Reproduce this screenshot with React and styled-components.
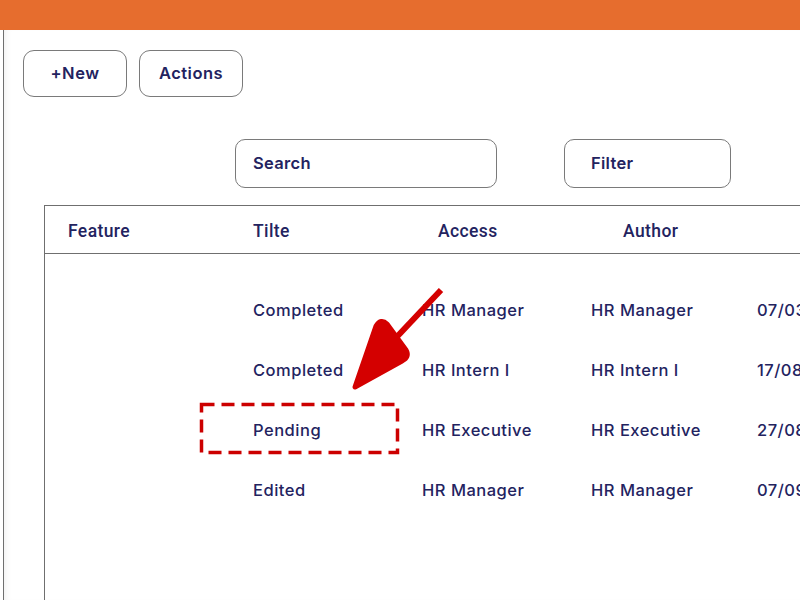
import React from "react";
import styled, { createGlobalStyle } from "styled-components";

const Global = createGlobalStyle`
  html, body { margin: 0; padding: 0; background: #fff; overflow: hidden; }
  body { font-family: Inter, "Open Sans", sans-serif; color: #23235f; }
`;

const Page = styled.div`
  position: relative;
  width: 800px;
  height: 600px;
  overflow: hidden;
`;

const TopBar = styled.div`
  height: 30px;
  background: #e66d2e;
`;

const Shell = styled.div`
  margin-left: 3px;
  height: 570px;
  border-left: 1.5px solid #6f6f6f;
  box-shadow: inset 6px 0 6px -4px rgba(0, 0, 0, 0.06);
`;

const Toolbar = styled.div`
  display: flex;
  gap: 12px;
  padding: 20px 0 0 19px;
`;

const Button = styled.button`
  width: 104px;
  height: 47px;
  padding: 0 0 2px;
  border: 1px solid #7a7a7a;
  border-radius: 11px;
  background: #fff;
  font-family: Inter, sans-serif;
  font-size: 16.5px;
  font-weight: 600;
  letter-spacing: 0.5px;
  color: #23235f;
`;

const SearchRow = styled.div`
  display: flex;
  gap: 67px;
  margin-top: 42px;
  padding-left: 231px;
`;

const Field = styled.div`
  width: ${(p) => p.$w}px;
  height: 49px;
  box-sizing: border-box;
  border: 1px solid #7a7a7a;
  border-radius: 10px;
  display: flex;
  align-items: center;
  padding: 0 0 2px ${(p) => p.$pad}px;
  font-size: 16.5px;
  font-weight: 600;
  letter-spacing: 0.3px;
  color: #23235f;
`;

const Table = styled.div`
  margin: 17px 0 0 40px;
  width: 800px;
  border-top: 1px solid #6f6f6f;
  border-left: 1px solid #6f6f6f;
`;

const HeadRow = styled.div`
  display: grid;
  grid-template-columns: 185px 185px 185px 185px;
  height: 48px;
  align-items: center;
  padding: 2px 0 0 23px;
  box-sizing: border-box;
  border-bottom: 1px solid #6f6f6f;
`;

const HeadCell = styled.div`
  font-family: Roboto, sans-serif;
  font-size: 17.5px;
  font-weight: 500;
  letter-spacing: 0.4px;
  color: #23235f;
`;

const Body = styled.div`
  padding-top: 26px;
  height: 320px;
`;

const Row = styled.div`
  display: grid;
  grid-template-columns: 208px 169px 169px 166px 200px;
  height: 60px;
  align-items: center;
  white-space: nowrap;
`;

const Cell = styled.div`
  font-size: 16.5px;
  font-weight: 500;
  color: #23235f;
  letter-spacing: 0.5px;
`;

const Overlay = styled.svg`
  position: absolute;
  left: 0;
  top: 0;
  pointer-events: none;
`;

const rows = [
  ["Completed", "HR Manager", "HR Manager", "07/03/2023"],
  ["Completed", "HR Intern I", "HR Intern I", "17/08/2023"],
  ["Pending", "HR Executive", "HR Executive", "27/08/2023"],
  ["Edited", "HR Manager", "HR Manager", "07/09/2023"],
];

export default function App() {
  return (
    <Page>
      <Global />
      <TopBar />
      <Shell>
        <Toolbar>
          <Button>+New</Button>
          <Button>Actions</Button>
        </Toolbar>
        <SearchRow>
          <Field $w={262} $pad={17}>Search</Field>
          <Field $w={167} $pad={26}>Filter</Field>
        </SearchRow>
        <Table>
          <HeadRow>
            <HeadCell>Feature</HeadCell>
            <HeadCell>Tilte</HeadCell>
            <HeadCell>Access</HeadCell>
            <HeadCell>Author</HeadCell>
          </HeadRow>
          <Body>
            {rows.map((r, i) => (
              <Row key={i}>
                <Cell />
                {r.map((c, j) => (
                  <Cell key={j}>{c}</Cell>
                ))}
              </Row>
            ))}
          </Body>
        </Table>
      </Shell>
      <Overlay width="800" height="600" viewBox="0 0 800 600">
        <line x1="441" y1="290" x2="392" y2="342" stroke="#d40000" strokeWidth="6" />
        <path
          d="M355 387 L376 326 Q381 318 387 324 L406 350 Q410 357 402 361 Z"
          fill="#d40000"
          stroke="#d40000"
          strokeWidth="5"
          strokeLinejoin="round"
        />
        <rect
          x="201.5"
          y="404.5"
          width="196"
          height="48"
          fill="none"
          stroke="#cc0000"
          strokeWidth="3.5"
          strokeDasharray="13 7"
        />
      </Overlay>
    </Page>
  );
}
